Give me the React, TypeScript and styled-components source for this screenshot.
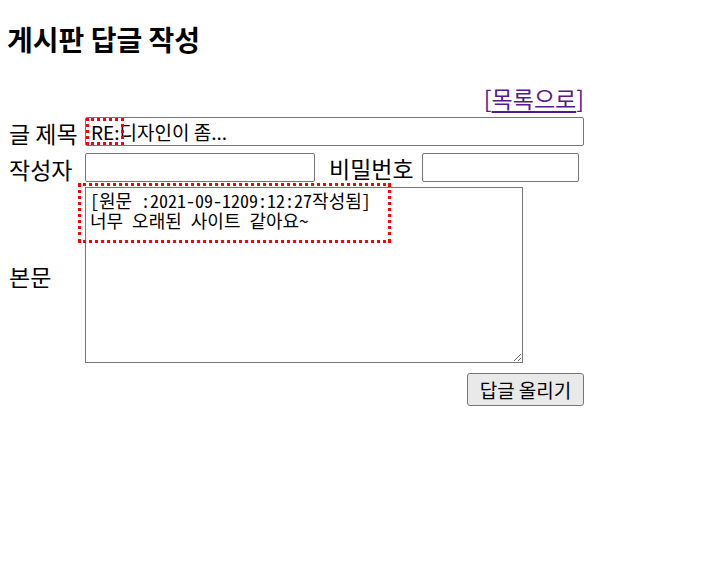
import styled, { createGlobalStyle } from "styled-components";

const GlobalStyle = createGlobalStyle`
    body {
        margin: 8px;
        background: #ffffff;
        color: #000000;
        font-family: "Noto Sans CJK KR", "Noto Sans", sans-serif;
    }
`;

function App() {
    return (
        <>
            <GlobalStyle />
            <Style_Title>게시판 답글 작성</Style_Title>

            <Style_Form>
                <Style_LinkRow>
                    [<a href="#list">목록으로</a>]
                </Style_LinkRow>

                <Style_Row $gap={5}>
                    <Style_Label>글 제목</Style_Label>
                    <Style_Field>
                        <Style_Input defaultValue="RE:디자인이 좀..." $width={499} />
                        <Style_Mark $left={1} $top={1} $width={38} $height={27} />
                    </Style_Field>
                </Style_Row>

                <Style_Row $gap={7}>
                    <Style_Label>작성자</Style_Label>
                    <Style_Field>
                        <Style_Input $width={230} />
                        <Style_InlineLabel>비밀번호</Style_InlineLabel>
                        <Style_Input type="password" $width={157} />
                    </Style_Field>
                </Style_Row>

                <Style_Row $gap={5}>
                    <Style_Label>본문</Style_Label>
                    <Style_Field>
                        <Style_Textarea
                            defaultValue={"[원문 :2021-09-1209:12:27작성됨]\n너무 오래된 사이트 같아요~"}
                        />
                        <Style_Mark $left={-7} $top={-4} $width={313} $height={60} />
                    </Style_Field>
                </Style_Row>

                <Style_ButtonRow>
                    <Style_Button type="button">답글 올리기</Style_Button>
                </Style_ButtonRow>
            </Style_Form>
        </>
    );
}

export default App;

const Style_Title = styled.h2`
    margin: 16px 0 30px -1px;
    font-size: 28px;
    font-weight: 700;
    line-height: 30px;
`;

const Style_Form = styled.div`
    width: 576px;
    font-size: 23px;
`;

const Style_LinkRow = styled.div`
    height: 28px;
    text-align: right;
    line-height: 28px;
    color: #551a8b;

    a {
        color: #551a8b;
        text-decoration: underline;
        text-decoration-thickness: 2px;
        text-underline-offset: 3px;
    }
`;

const Style_Row = styled.div<{ $gap: number }>`
    display: grid;
    grid-template-columns: 77px 499px;
    align-items: center;
    margin-top: ${(p) => p.$gap}px;
`;

const Style_Label = styled.div`
    padding: 2px 0 0 1px;
    line-height: 26px;
    white-space: nowrap;
`;

const Style_Field = styled.div`
    position: relative;
    display: flex;
    align-items: center;
`;

const Style_InlineLabel = styled.span`
    margin: 0 8px 0 14px;
    line-height: 28px;
`;

const Style_Input = styled.input<{ $width: number }>`
    box-sizing: border-box;
    width: ${(p) => p.$width}px;
    height: 29px;
    padding: 0 5px;
    border: 1px solid #767676;
    border-radius: 2px;
    font-family: "Noto Sans CJK KR", "Noto Sans", sans-serif;
    font-size: 19px;
    color: #000000;
    background: #ffffff;
    outline: none;
`;

const Style_Textarea = styled.textarea`
    box-sizing: border-box;
    width: 438px;
    height: 176px;
    padding: 2px 4px;
    border: 1px solid #767676;
    border-radius: 0;
    font-family: "Noto Sans Mono CJK KR", "Liberation Mono", "Noto Sans CJK KR", monospace;
    font-size: 18px;
    line-height: 20px;
    color: #000000;
    outline: none;
`;

const Style_Mark = styled.span<{ $left: number; $top: number; $width: number; $height: number }>`
    position: absolute;
    left: ${(p) => p.$left}px;
    top: ${(p) => p.$top}px;
    width: ${(p) => p.$width}px;
    height: ${(p) => p.$height}px;
    box-sizing: border-box;
    border: 3px dotted #ff0000;
    pointer-events: none;
`;

const Style_ButtonRow = styled.div`
    display: flex;
    justify-content: flex-end;
    margin-top: 10px;
`;

const Style_Button = styled.button`
    box-sizing: border-box;
    width: 117px;
    height: 33px;
    padding: 0;
    border: 1px solid #767676;
    border-radius: 3px;
    background: #e9e9e9;
    font-family: "Noto Sans CJK KR", "Noto Sans", sans-serif;
    font-size: 19px;
    line-height: 1;
    color: #000000;
`;
